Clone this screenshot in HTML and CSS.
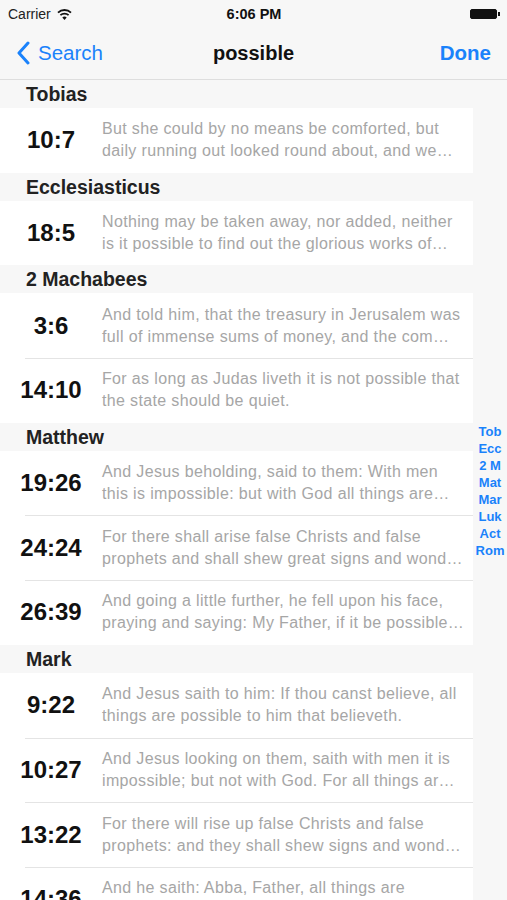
FILE: index.html
```html
<!DOCTYPE html>
<html lang="en">
<head>
    <meta charset="UTF-8">
    <meta name="viewport" content="width=device-width, initial-scale=1.0">
    <title>possible</title>
    <link rel="stylesheet" href="styles.css">
</head>
<body>

    <header class="top">
        <div class="status">
            <div class="status-left">
                Carrier
                <svg class="wifi" width="15" height="11" viewBox="0 0 15 11">
                    <path d="M7.5 11 L5.3 8.4 A3.3 3.3 0 0 1 9.7 8.4 Z" fill="#111"/>
                    <path d="M3.4 6.2 A6 6 0 0 1 11.6 6.2" stroke="#111" stroke-width="1.8" fill="none"/>
                    <path d="M1 3.6 A9.4 9.4 0 0 1 14 3.6" stroke="#111" stroke-width="1.8" fill="none"/>
                </svg>
            </div>
            <div class="status-time">6:06 PM</div>
            <div class="status-right">
                <span class="battery"></span><span class="nub"></span>
            </div>
        </div>
        <div class="navbar">
            <a class="back" href="#">
                <svg width="14" height="24" viewBox="0 0 14 24">
                    <path d="M12 2 L3 12 L12 22" stroke="#1a82fb" stroke-width="3" fill="none" stroke-linecap="round" stroke-linejoin="round"/>
                </svg>
                Search
            </a>
            <h1>possible</h1>
            <a class="done" href="#">Done</a>
        </div>
    </header>

    <main class="content">
        <div class="list">
            <div class="section">Tobias</div>
            <div class="row">
                <div class="verse">10:7</div>
                <div class="text">
                    <span>But she could by no means be comforted, but</span>
                    <span>daily running out looked round about, and we…</span>
                </div>
            </div>

            <div class="section">Ecclesiasticus</div>
            <div class="row">
                <div class="verse">18:5</div>
                <div class="text">
                    <span>Nothing may be taken away, nor added, neither</span>
                    <span>is it possible to find out the glorious works of…</span>
                </div>
            </div>

            <div class="section">2 Machabees</div>
            <div class="row">
                <div class="verse">3:6</div>
                <div class="text">
                    <span>And told him, that the treasury in Jerusalem was</span>
                    <span>full of immense sums of money, and the com…</span>
                </div>
            </div>
            <div class="row">
                <div class="verse">14:10</div>
                <div class="text">
                    <span>For as long as Judas liveth it is not possible that</span>
                    <span>the state should be quiet.</span>
                </div>
            </div>

            <div class="section">Matthew</div>
            <div class="row">
                <div class="verse">19:26</div>
                <div class="text">
                    <span>And Jesus beholding, said to them: With men</span>
                    <span>this is impossible: but with God all things are…</span>
                </div>
            </div>
            <div class="row">
                <div class="verse">24:24</div>
                <div class="text">
                    <span>For there shall arise false Christs and false</span>
                    <span>prophets and shall shew great signs and wond…</span>
                </div>
            </div>
            <div class="row">
                <div class="verse">26:39</div>
                <div class="text">
                    <span>And going a little further, he fell upon his face,</span>
                    <span>praying and saying: My Father, if it be possible…</span>
                </div>
            </div>

            <div class="section">Mark</div>
            <div class="row">
                <div class="verse">9:22</div>
                <div class="text">
                    <span>And Jesus saith to him: If thou canst believe, all</span>
                    <span>things are possible to him that believeth.</span>
                </div>
            </div>
            <div class="row">
                <div class="verse">10:27</div>
                <div class="text">
                    <span>And Jesus looking on them, saith with men it is</span>
                    <span>impossible; but not with God. For all things ar…</span>
                </div>
            </div>
            <div class="row">
                <div class="verse">13:22</div>
                <div class="text">
                    <span>For there will rise up false Christs and false</span>
                    <span>prophets: and they shall shew signs and wond…</span>
                </div>
            </div>
            <div class="row">
                <div class="verse">14:36</div>
                <div class="text">
                    <span>And he saith: Abba, Father, all things are</span>
                    <span>possible to thee: remove this chalice from me…</span>
                </div>
            </div>
        </div>

        <nav class="index">
            <a href="#">Tob</a>
            <a href="#">Ecc</a>
            <a href="#">2 M</a>
            <a href="#">Mat</a>
            <a href="#">Mar</a>
            <a href="#">Luk</a>
            <a href="#">Act</a>
            <a href="#">Rom</a>
        </nav>
    </main>

</body>
</html>
```

FILE: styles.css
```css
body {
    margin: 0;
    width: 507px;
    height: 900px;
    overflow: hidden;
    font-family: "Liberation Sans", Arial, sans-serif;
    background: #f7f7f7;
    color: #111;
}
.top {
    background: #f7f7f7;
    border-bottom: 1px solid #dedede;
    height: 79px;
}
.status {
    height: 28px;
    display: flex;
    align-items: center;
    justify-content: space-between;
    padding: 0 7px 0 8px;
    font-size: 14px;
}
.status-left {
    display: flex;
    align-items: center;
    gap: 6px;
    width: 120px;
    color: #222;
}
.status-time {
    font-weight: bold;
    font-size: 14.5px;
}
.status-right {
    width: 120px;
    display: flex;
    justify-content: flex-end;
    align-items: center;
}
.battery {
    width: 25px;
    height: 8px;
    background: #111;
    border: 1px solid #111;
    border-radius: 2px;
}
.nub {
    width: 2px;
    height: 4px;
    background: #111;
    margin-left: 1px;
}
.navbar {
    height: 50px;
    display: flex;
    align-items: center;
    justify-content: space-between;
    padding: 0 16px;
    position: relative;
}
.navbar a {
    color: #1a82fb;
    text-decoration: none;
    font-size: 20.5px;
}
.back {
    display: flex;
    align-items: center;
    gap: 8px;
}
.navbar h1 {
    font-size: 20px;
    margin: 0;
    font-weight: bold;
    position: absolute;
    left: 0;
    right: 0;
    text-align: center;
    pointer-events: none;
}
.done {
    font-weight: bold;
}
.content {
    display: flex;
    height: 821px;
}
.list {
    width: 473px;
}
.section {
    height: 28px;
    line-height: 28px;
    padding-left: 26px;
    font-size: 19.5px;
    font-weight: bold;
    color: #222;
    background: #f7f7f7;
}
.row {
    height: 64.7px;
    display: flex;
    align-items: center;
    background: #fff;
}
.row + .row {
    background-image: linear-gradient(#e4e4e4, #e4e4e4);
    background-size: calc(100% - 25px) 1px;
    background-position: right top;
    background-repeat: no-repeat;
}
.verse {
    width: 102px;
    flex: none;
    text-align: center;
    font-size: 24px;
    font-weight: bold;
    color: #111;
}
.text {
    font-size: 16px;
    letter-spacing: 0.35px;
    line-height: 22px;
    color: #a6a6a6;
}
.text span {
    display: block;
    white-space: nowrap;
}
.index {
    width: 34px;
    display: flex;
    flex-direction: column;
    justify-content: center;
    align-items: center;
    background: #f7f7f7;
}
.index a {
    color: #1a82fb;
    text-decoration: none;
    font-size: 13px;
    font-weight: bold;
    line-height: 17px;
}
```
